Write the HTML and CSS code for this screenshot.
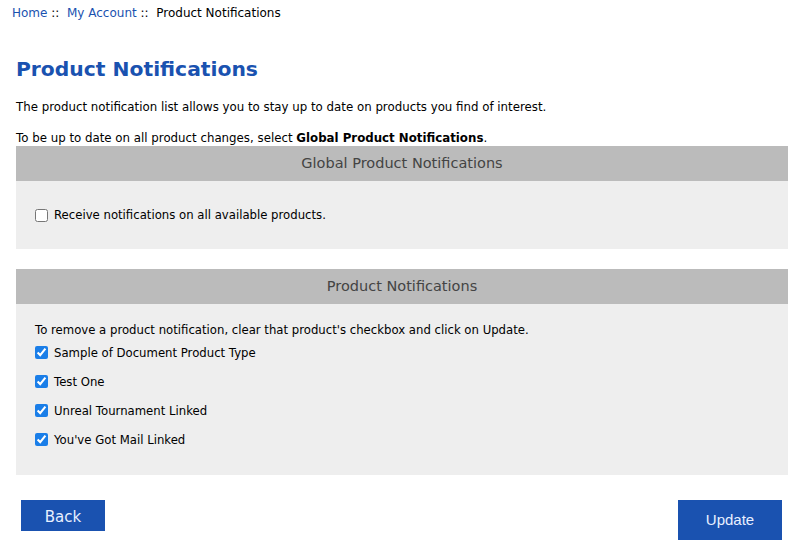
FILE: index.html
```html
<!DOCTYPE html>
<html>
<head>
<meta charset="utf-8">
<link rel="stylesheet" href="styles.css">
</head>
<body>
<div class="page">
  <nav class="crumbs"><a href="#">Home</a> ::&nbsp; <a href="#">My Account</a> ::&nbsp; Product Notifications</nav>
  <h1 class="title">Product Notifications</h1>
  <p class="intro">The product notification list allows you to stay up to date on products you find of interest.</p>
  <p class="intro second">To be up to date on all product changes, select <b>Global Product Notifications</b>.</p>

  <section class="box">
    <div class="box-head">Global Product Notifications</div>
    <div class="box-body global">
      <label class="row"><input type="checkbox"> Receive notifications on all available products.</label>
    </div>
  </section>

  <section class="box">
    <div class="box-head">Product Notifications</div>
    <div class="box-body list">
      <div class="note">To remove a product notification, clear that product's checkbox and click on Update.</div>
      <label class="row item"><input type="checkbox" checked> Sample of Document Product Type</label>
      <label class="row item"><input type="checkbox" checked> Test One</label>
      <label class="row item"><input type="checkbox" checked> Unreal Tournament Linked</label>
      <label class="row item"><input type="checkbox" checked> You've Got Mail Linked</label>
    </div>
  </section>

  <div class="actions">
    <button class="btn back">Back</button>
    <button class="btn update">Update</button>
  </div>
</div>
</body>
</html>
```
FILE: styles.css
```css
html, body { margin: 0; padding: 0; background: #fff; }
body { font-family: "DejaVu Sans", Verdana, sans-serif; font-size: 12px; color: #000; }
.page { padding: 6px 12px 0 16px; }
.crumbs { margin-left: -4px; line-height: 14px; font-size: 12px; }
.crumbs a { color: #1a52b0; text-decoration: none; }
.title { margin: 34px 0 0; font-size: 20.3px; line-height: 30px; color: #1a52b0; font-weight: bold; }
.intro { margin: 15px 0 0; line-height: 16px; font-size: 11.8px; }
.intro.second { margin-top: 15px; }
.box + .box { margin-top: 20px; }
.box-head { background: #bbbbbb; color: #444; font-size: 14.5px; height: 35px; line-height: 35px; text-align: center; }
.box-body { background: #eeeeee; padding: 0 19px; font-size: 11.7px; }
.box-body.global { height: 68px; display: flex; align-items: center; }
.box-body.list { padding-top: 18px; padding-bottom: 21px; }
.row { display: flex; align-items: center; gap: 6px; line-height: 16px; }
.row input { margin: 0; width: 13px; height: 13px; accent-color: #1a7ee8; }
.note { line-height: 16px; }
.item { height: 29px; }
.actions { display: flex; justify-content: space-between; align-items: flex-start; margin-top: 25px; padding: 0 6px 0 5px; }
.btn { background: #1a52b0; color: #e8f0ff; border: none; padding: 0; cursor: pointer; }
.back { width: 84px; height: 31px; padding-top: 2px; font-family: "DejaVu Sans", Verdana, sans-serif; font-size: 15px; }
.update { width: 104px; height: 40px; padding-bottom: 2px; font-family: "Liberation Sans", Arial, sans-serif; font-size: 15px; }
```
